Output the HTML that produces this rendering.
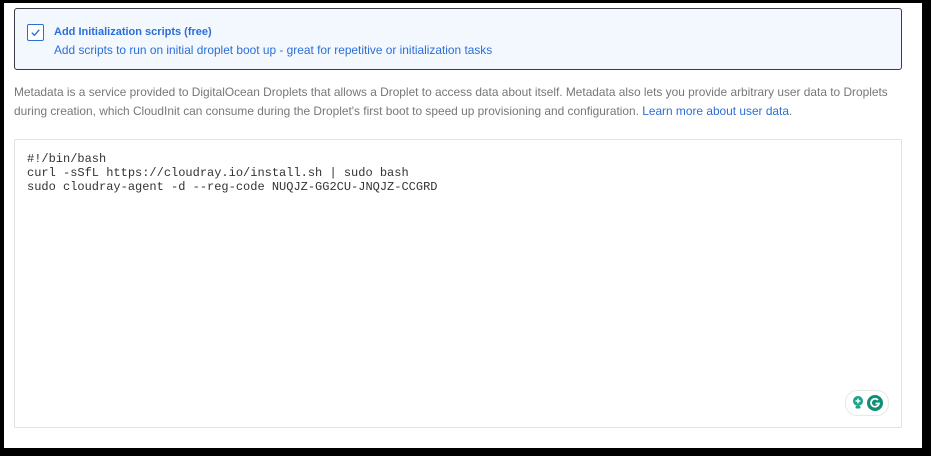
<!DOCTYPE html>
<html><head><style>
html,body{margin:0;padding:0;}
body{width:931px;height:456px;background:#000;position:relative;overflow:hidden;font-family:"Liberation Sans",sans-serif;}
.page{position:absolute;left:4px;top:3px;width:918px;height:445px;background:#fff;}
.panel{position:absolute;left:10px;top:5px;width:886px;height:60px;background:#f3f7fe;border:1px solid #3a3a4a;border-radius:3px;}
.cb{position:absolute;left:12px;top:15px;width:15px;height:15px;border:1.5px solid #2a6fd8;border-radius:2px;background:#fff;}
.t1{position:absolute;left:39px;top:17px;font-size:11px;font-weight:bold;color:#2a6fd8;}
.t2{position:absolute;left:39px;top:34px;font-size:11.9px;color:#2a6fd8;white-space:nowrap;}
.meta{position:absolute;left:10px;top:80px;width:905px;font-size:11.9px;line-height:19px;color:#777;white-space:nowrap;}
.meta a{color:#2a6fd8;text-decoration:none;}
.code{position:absolute;left:10px;top:136px;width:886px;height:287px;border:1px solid #e2e2e2;border-radius:2px;}
pre{position:absolute;left:12px;top:12px;margin:0;font-family:"Liberation Mono",monospace;font-size:12px;line-height:14px;color:#333;}
.g{position:absolute;left:830px;top:250px;width:42px;height:24px;border:1px solid #e8e8e8;border-radius:12px;background:#fff;}
</style></head><body>
<div class="page">
<div class="panel">
<div class="cb"><svg width="15" height="15" viewBox="0 0 14 14" style="position:absolute;left:0;top:0"><path d="M3.5 7.2 L6 9.6 L10.5 4.5" fill="none" stroke="#2a6fd8" stroke-width="1.3"/></svg></div>
<div class="t1">Add Initialization scripts (free)</div>
<div class="t2">Add scripts to run on initial droplet boot up - great for repetitive or initialization tasks</div>
</div>
<div class="meta">Metadata is a service provided to DigitalOcean Droplets that allows a Droplet to access data about itself. Metadata also lets you provide arbitrary user data to Droplets<br>during creation, which CloudInit can consume during the Droplet's first boot to speed up provisioning and configuration. <a>Learn more about user data</a>.</div>
<div class="code">
<pre>#!/bin/bash
curl -sSfL https://cloudray.io/install.sh | sudo bash
sudo cloudray-agent -d --reg-code NUQJZ-GG2CU-JNQJZ-CCGRD</pre>
<div class="g"><svg width="42" height="24" viewBox="0 0 42 24">
<circle cx="12" cy="10" r="5" fill="#15a58a"/><rect x="9.5" y="15" width="5" height="2.5" rx="1" fill="#15a58a"/><path d="M12 7.5v5M9.5 10h5" stroke="#fff" stroke-width="1.4"/>
<circle cx="29" cy="12" r="8" fill="#0f8f74"/><path d="M32 9a4 4 0 1 0 1 3.5h-3.5" fill="none" stroke="#fff" stroke-width="1.8"/>
</svg></div>
</div>
</div>
</body></html>
